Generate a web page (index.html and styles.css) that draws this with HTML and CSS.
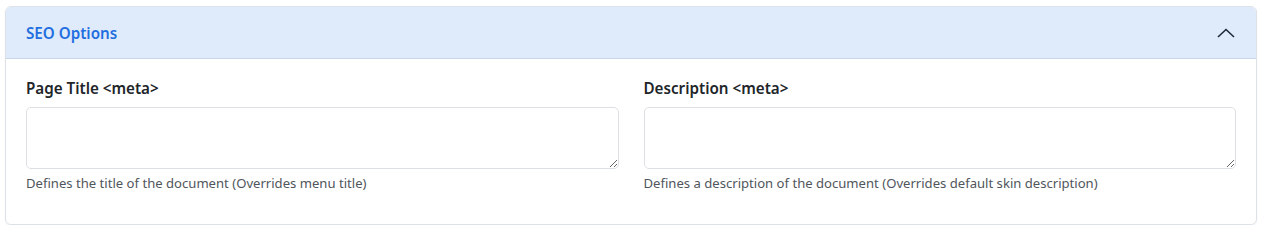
FILE: index.html
```html
<!DOCTYPE html>
<html lang="en">
<head>
    <meta charset="UTF-8">
    <title>SEO Options</title>
    <link rel="stylesheet" href="styles.css">
</head>
<body>
    <div class="card">
        <div class="card-header">
            <span class="card-title">SEO Options</span>
            <svg class="chevron" width="18" height="10" viewBox="0 0 18 10">
                <polyline points="1,9 9,1.5 17,9" fill="none" stroke="#1e2a3a" stroke-width="1.6"/>
            </svg>
        </div>
        <div class="card-body">
            <div class="field">
                <label class="field-label">Page Title &lt;meta&gt;</label>
                <textarea class="field-input"></textarea>
                <p class="field-help">Defines the title of the document (Overrides menu title)</p>
            </div>
            <div class="field">
                <label class="field-label">Description &lt;meta&gt;</label>
                <textarea class="field-input"></textarea>
                <p class="field-help">Defines a description of the document (Overrides default skin description)</p>
            </div>
        </div>
    </div>
</body>
</html>
```

FILE: styles.css
```css
/* Page */
body {
    margin: 0;
    padding: 6px 10px 0 5px;
    font-family: 'Noto Sans', 'Open Sans', sans-serif;
    background: #ffffff;
    color: #212529;
}

/* Card */
.card {
    border: 1px solid #dde2e8;
    border-radius: 6px;
    box-shadow: 0 1px 2px rgba(0, 0, 0, 0.06);
    overflow: hidden;
}

.card-header {
    display: flex;
    justify-content: space-between;
    align-items: center;
    height: 51px;
    padding: 1px 21px 0 20px;
    box-sizing: border-box;
    height: 52px;
    background-color: #dfebfb;
    border-bottom: 1px solid #c9d6e8;
}

.card-title {
    color: #1f6fe0;
    font-size: 15.2px;
    font-weight: 600;
}

.chevron {
    display: block;
}

.card-body {
    display: grid;
    grid-template-columns: 1fr 1fr;
    gap: 25px;
    padding: 19px 20px 32px 20px;
}

/* Fields */
.field-label {
    display: block;
    font-size: 15.2px;
    font-weight: 600;
    color: #212529;
    margin-bottom: 9px;
}

.field-input {
    display: block;
    box-sizing: border-box;
    width: 100%;
    height: 62px;
    border: 1px solid #dcdfe3;
    border-radius: 5px;
    resize: vertical;
    font-family: inherit;
}

.field-help {
    margin: 5px 0 0 0;
    font-size: 13.1px;
    color: #50565c;
}
```
